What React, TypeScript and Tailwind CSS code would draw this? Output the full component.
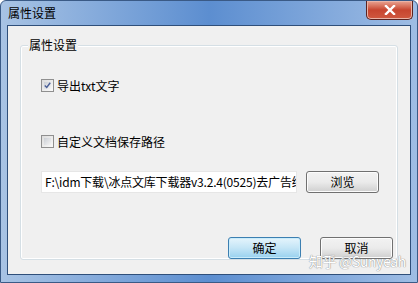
import React from 'react'

const font = { fontFamily: '"Noto Sans CJK SC", "Liberation Sans", sans-serif' }

function Checkbox({ checked }: { checked?: boolean }) {
  return (
    <div className="w-[13px] h-[13px] border border-[#8f8f8f] bg-gradient-to-br from-[#dcdcdc] to-[#fafafa] flex items-center justify-center p-[2px]">
      <div className="w-full h-full bg-gradient-to-br from-[#cbcfd5] to-[#f4f4f4] flex items-center justify-center">
        {checked && (
          <svg width="9" height="9" viewBox="0 0 9 9">
            <path d="M1 4.5 L3.5 7 L8 1" fill="none" stroke="#4a5f97" strokeWidth="1.8" />
          </svg>
        )}
      </div>
    </div>
  )
}

function Button({ label, primary }: { label: string; primary?: boolean }) {
  return (
    <div
      className={`w-[73px] h-[22px] rounded-[3px] border flex items-center justify-center text-[12px] text-black ${
        primary
          ? 'border-[#3c7fb1] bg-gradient-to-b from-[#e5f4fc] via-[#c4e5f6] to-[#98d1ef] shadow-[inset_0_0_0_1px_#c9ecfb]'
          : 'border-[#707070] bg-gradient-to-b from-[#f2f2f2] via-[#ebebeb] to-[#cfcfcf] shadow-[inset_0_0_0_1px_#fcfcfc]'
      }`}
    >
      {label}
    </div>
  )
}

export default function App() {
  return (
    <div className="w-[418px] h-[283px] overflow-hidden bg-white" style={font}>
      <div className="w-full h-full rounded-t-[6px] border border-[#3a5a86] bg-gradient-to-r from-[#a8c3e4] via-[#5c8ed0] to-[#9fbde4] flex flex-col relative">
        {/* Title bar */}
        <div className="h-[27px] flex items-center pl-[7px] pr-[4px] justify-between">
          <span className="text-[12px] text-black">属性设置</span>
          <div className="self-start w-[47px] h-[19px] rounded-b-[5px] border border-t-0 border-[#5b2320] bg-gradient-to-b from-[#e8a493] via-[#c7452f] to-[#d0583f] flex items-center justify-center shadow-[inset_0_0_0_1px_#eab3a6]">
            <svg width="12" height="10" viewBox="0 0 12 10">
              <path d="M2 1 L10 9 M10 1 L2 9" stroke="#ffffff" strokeWidth="2.4" strokeLinecap="square" />
            </svg>
          </div>
        </div>

        {/* Client area */}
        <div className="mx-[6px] mb-[7px] flex-1 border border-[#2f4f7a] bg-[#f0f0f0] px-[12px] pt-[19px] pb-[14px] flex">
          <div className="flex-1 relative border border-[#d5dfe5] rounded-[3px] shadow-[inset_0_0_0_1px_#ffffff] pl-[20px] pr-[4px] pt-[32px] flex flex-col">
            <span className="absolute left-[7px] -top-[10px] px-[1px] bg-[#f0f0f0] text-[12px] text-black leading-[18px]">
              属性设置
            </span>

            <div className="flex items-center gap-[3px] h-[15px]">
              <Checkbox checked />
              <span className="text-[12px] text-black">导出txt文字</span>
            </div>

            <div className="flex items-center gap-[3px] h-[15px] mt-[41px]">
              <Checkbox />
              <span className="text-[12px] text-black">自定义文档保存路径</span>
            </div>

            <div className="flex items-center mt-[22px] gap-[9px]">
              <div className="w-[256px] h-[22px] bg-white border border-[#e6e6e6] flex items-center pl-[3px] overflow-hidden">
                <span className="whitespace-nowrap text-[12px] text-black tracking-[-0.2px]">
                  F:\idm下载\冰点文库下载器v3.2.4(0525)去广告绿
                </span>
              </div>
              <Button label="浏览" />
            </div>

            <div className="flex justify-end gap-[19px] mt-[44px]">
              <Button label="确定" primary />
              <Button label="取消" />
            </div>

            <span className="absolute right-[-9px] bottom-[-13px] text-[14px] text-white tracking-tight [text-shadow:0_0_1px_#8a8a8a,0_0_1px_#8a8a8a]">
              知乎 @Sunyeah
            </span>
          </div>
        </div>
      </div>
    </div>
  )
}
